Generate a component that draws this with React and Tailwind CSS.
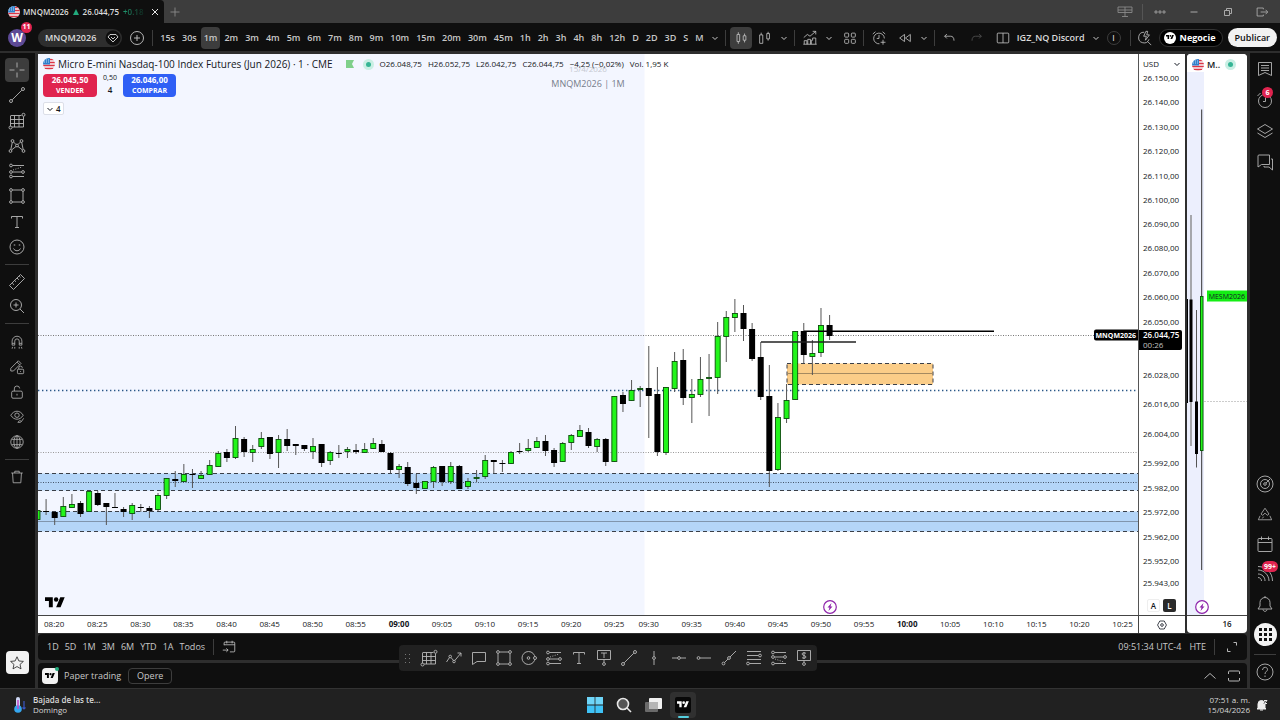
import { Fragment } from 'react';
import clsx from 'clsx';

// [wick top, body top, body bottom, wick bottom, up], oldest bar first
const CANDLES = [
  [510, 510, 520, 520, 1], [499, 511, 512, 515, 0], [512, 512, 518, 525, 0], [497, 506, 517, 517, 1],
  [494, 504, 508, 508, 1], [501, 503, 514, 517, 0], [491, 491, 512, 512, 1], [491, 493, 505, 506, 0],
  [503, 503, 507, 525, 0], [493, 507, 508, 508, 1], [507, 509, 512, 517, 0], [503, 505, 514, 520, 1],
  [504, 507, 508, 512, 1], [506, 508, 511, 518, 0], [493, 495, 510, 511, 1], [478, 478, 496, 499, 1],
  [471, 479, 481, 487, 0], [464, 474, 482, 482, 1], [469, 474, 475, 488, 1], [471, 475, 479, 479, 1],
  [460, 465, 475, 475, 1], [451, 453, 467, 467, 1], [449, 452, 458, 462, 0], [426, 438, 458, 459, 1],
  [437, 439, 452, 457, 0], [445, 449, 453, 462, 1], [432, 438, 447, 449, 1], [437, 437, 454, 459, 0],
  [435, 439, 453, 468, 1], [429, 439, 446, 451, 0], [444, 444, 446, 455, 0], [445, 445, 449, 451, 0],
  [438, 446, 452, 459, 1], [444, 444, 463, 467, 0], [451, 452, 461, 465, 1], [445, 453, 454, 458, 1],
  [447, 449, 452, 458, 1], [444, 450, 452, 454, 0], [443, 449, 453, 453, 1], [438, 443, 449, 449, 1],
  [440, 444, 452, 452, 0], [452, 453, 470, 473, 0], [464, 466, 470, 478, 1], [462, 467, 484, 486, 0],
  [474, 483, 488, 494, 0], [481, 481, 489, 489, 1], [466, 467, 482, 488, 1], [466, 466, 482, 486, 0],
  [462, 466, 482, 484, 1], [465, 466, 489, 489, 0], [478, 481, 487, 489, 1], [470, 477, 479, 482, 1],
  [455, 460, 477, 479, 1], [460, 460, 462, 473, 0], [460, 463, 464, 472, 0], [451, 452, 464, 464, 1],
  [443, 451, 452, 454, 0], [439, 448, 451, 452, 1], [437, 441, 448, 448, 1], [435, 441, 451, 456, 0],
  [448, 450, 463, 467, 0], [442, 443, 462, 462, 1], [434, 435, 443, 450, 1], [425, 430, 437, 437, 1],
  [428, 432, 446, 448, 0], [438, 439, 447, 452, 1], [438, 439, 462, 466, 0], [396, 396, 462, 462, 1],
  [392, 395, 404, 412, 0], [380, 390, 401, 401, 1], [386, 388, 390, 407, 1], [346, 388, 396, 438, 0],
  [367, 394, 452, 456, 0], [387, 387, 453, 455, 1], [352, 361, 389, 392, 1], [349, 360, 398, 405, 0],
  [379, 394, 398, 423, 1], [357, 379, 395, 397, 1], [354, 377, 379, 416, 1], [322, 336, 378, 394, 1],
  [311, 317, 337, 362, 1], [299, 313, 318, 332, 1], [305, 313, 329, 341, 0], [323, 329, 359, 361, 0],
  [342, 357, 397, 400, 0], [365, 396, 471, 487, 0], [403, 417, 470, 471, 1], [384, 400, 419, 423, 1],
  [331, 331, 400, 400, 1], [323, 331, 355, 363, 0], [340, 353, 357, 375, 1], [308, 325, 353, 357, 1],
  [315, 325, 336, 340, 0],
];

const PRICES = [
  ['26.150,00', 78], ['26.140,00', 102], ['26.130,00', 127], ['26.120,00', 151], ['26.110,00', 176],
  ['26.100,00', 200], ['26.090,00', 224], ['26.080,00', 248], ['26.070,00', 273], ['26.060,00', 297],
  ['26.050,00', 322], ['26.028,00', 375], ['26.016,00', 404], ['26.004,00', 434], ['25.992,00', 463],
  ['25.982,00', 488], ['25.972,00', 512], ['25.962,00', 537], ['25.952,00', 561], ['25.943,00', 583],
];

// label and the number of bars up to the next one
const TIMES = [
  ['08:20', 5], ['08:25', 5], ['08:30', 5], ['08:35', 5], ['08:40', 5], ['08:45', 5], ['08:50', 5], ['08:55', 5],
  ['09:00', 5], ['09:05', 5], ['09:10', 5], ['09:15', 5], ['09:20', 5], ['09:25', 4], ['09:30', 5], ['09:35', 5],
  ['09:40', 5], ['09:45', 5], ['09:50', 5], ['09:55', 5], ['10:00', 5], ['10:05', 5], ['10:10', 5], ['10:15', 5],
  ['10:20', 5], ['10:25', 3],
];

const INTERVALS = [
  '15s', '30s', '1m', '2m', '3m', '4m', '5m', '6m', '7m', '8m', '9m', '10m', '15m', '20m', '30m', '45m',
  '1h', '2h', '3h', '4h', '8h', '12h', 'D', '2D', '3D', 'S', 'M',
];

const ICONS = {
  cross: <path d="M9 1.500v5M9 11.500v5M1.500 9h5M11.500 9h5" />,
  trend: <><circle cx="3" cy="15" r="1.500" /><circle cx="15" cy="3" r="1.500" /><path d="M4.200 13.800 13.800 4.200" /></>,
  gann: <><path d="M2.500 4v10.500M2.500 3.500h11M15.500 4.500v10.500H4M6.500 3.500v11.500M11 3.500v11.500M2.500 7.500h13M2.500 11.500h13" /><circle cx="15.500" cy="2.800" r="1.500" /><circle cx="2.500" cy="15.500" r="1.500" /></>,
  pattern: <><circle cx="4.500" cy="4" r="1.400" /><circle cx="13.500" cy="4" r="1.400" /><circle cx="9" cy="8.500" r="1.400" /><circle cx="2.500" cy="14" r="1.400" /><circle cx="15.500" cy="14" r="1.400" /><path d="m4.300 5.300-1.500 7.300M13.700 5.300l1.500 7.300M5.500 5l2.500 2.500M12.500 5 10 7.500M3.500 13l4.500-3.500M14.500 13 10 9.500" /></>,
  forecast: <><circle cx="3" cy="3.500" r="1.400" /><circle cx="3" cy="10" r="1.400" /><circle cx="15" cy="10" r="1.400" /><circle cx="3" cy="14.500" r="1.400" /><path d="M4.500 3.500H16M4.500 10h9M4.500 14.500H16" /><path d="m5 8 9-3" strokeDasharray="1 1.500" /></>,
  rect: <><path d="M3 4.500v9M15 4.500v9M4.500 3h9M4.500 15h9" /><circle cx="3" cy="3" r="1.400" /><circle cx="15" cy="3" r="1.400" /><circle cx="3" cy="15" r="1.400" /><circle cx="15" cy="15" r="1.400" /></>,
  text: <path d="M3.500 5.500v-2h11v2M9 3.500v11M7 14.500h4" />,
  smile: <><circle cx="9" cy="9" r="7" /><path d="M5.500 10.500c1.500 3 5.500 3 7 0" /><path d="M6.500 6.500v1M11.500 6.500v1" strokeWidth="1.500" /></>,
  ruler: <path d="M1.500 12.500 12.500 1.500l4 4L5.500 16.500zM4.200 10l1.800 1.800M6.700 7.500 8 8.800M9 5l1.800 1.800M11.200 3l1.300 1.300" />,
  zoom: <><circle cx="8" cy="8" r="5.500" /><path d="m12 12 4 4M8 5.500v5M5.500 8h5" /></>,
  magnet: <path d="M3.500 12.500V8a5.500 5.500 0 0 1 11 0v4.500h-3V8a2.500 2.500 0 0 0-5 0v4.500zM3.500 10.500h3M11.500 10.500h3M4 14.500l-.5 2M6.500 14.500v2M11.500 14.500v2M14 14.500l.5 2" />,
  penlock: <><path d="M2 13.500v-3L10.500 2l3 3L5 13.500zM9 3.500l3 3" /><rect x="9.500" y="11.500" width="7" height="5" rx="1" /><path d="M11 11.500V10a2 2 0 0 1 4 0M13 13.500v1" /></>,
  unlock: <><rect x="3" y="8" width="12" height="8" rx="1.500" /><path d="M6 8V5.500a3 3 0 0 1 6-.5M9 11v2" /></>,
  eye: <><path d="M2 7c3.500-6 10.500-6 14 0-3.500 6-10.500 6-14 0z" /><circle cx="9" cy="7" r="2.500" /><path d="m10 15 2-2 2 1 2.500-3.500M10 15h3l1-1" /></>,
  globe: <><circle cx="9" cy="9" r="7" /><ellipse cx="9" cy="9" rx="3.500" ry="7" /><path d="M3 6h12M3 12h12M9 2v14" /></>,
  trash: <path d="M2.500 4.500h13M6.500 4.500v-2h5v2M4 4.500l.7 11h8.600l.7-11" />,
  star: <path d="m9 2 2.100 4.700 5.100.5-3.800 3.400 1.100 5L9 13l-4.500 2.600 1.100-5L1.800 7.200l5.100-.5z" />,
  path: <><path d="m1.500 13 3-4.500M6 8.500l2.500 3M9.800 11.500 16 4M12.500 4H16v3.500" /><circle cx="5.200" cy="7.500" r="1.300" /><circle cx="9" cy="12.500" r="1.300" /></>,
  callout: <path d="M2.500 3.500h13v9H7l-4.500 3z" />,
  circle: <><circle cx="8.500" cy="9" r="6.500" /><circle cx="8.500" cy="9" r="1.300" /><circle cx="15" cy="9" r="1.500" fill="#212121" /></>,
  textbox: <><path d="M2.500 1.500h13v9h-13zM6 4h6M9 4v5M9 10.500v3" /><circle cx="9" cy="15" r="1.400" /></>,
  vline: <><path d="M9 2v5.500M9 10.500V16" /><circle cx="9" cy="9" r="1.400" /></>,
  hline: <><path d="M2 9h5.500M10.500 9H16" /><circle cx="9" cy="9" r="1.400" /></>,
  hray: <><path d="M5 9h11" /><circle cx="3.500" cy="9" r="1.400" /></>,
  ray: <><circle cx="3.500" cy="14.500" r="1.400" /><circle cx="9" cy="9" r="1.400" /><path d="m4.500 13.500 3.500-3.500M10 8l6-6" /></>,
  fib: <><path d="M2 2.500h14M2 6.500h11.500M2 10.500h14M4.500 14.500H16" /><circle cx="15" cy="6.500" r="1.400" /><circle cx="3" cy="14.500" r="1.400" /></>,
  short: <><circle cx="3" cy="3.500" r="1.400" /><circle cx="3" cy="8" r="1.400" /><circle cx="15" cy="8" r="1.400" /><circle cx="3" cy="14.500" r="1.400" /><path d="M4.500 3.500H16M4.500 8h9M4.500 14.500H16" /><path d="m5 10 9 3" strokeDasharray="1 1.500" /></>,
  price: <><path d="M2.500 1.500h13v10h-13zM9 11.500v2M11 4.500c-.5-1-4-1-4 .5S11 6.500 11 8s-3.500 1.500-4 .5M9 3v7" /><circle cx="9" cy="15" r="1.400" /></>,
  candles: <path d="M4.500 5h3v8h-3zM6 2.500V5M6 13v2.500M11.500 6.500h3v5h-3zM13 4v2.500M13 11.500V14" />,
  candles2: <path d="M3 5.500h3.500V15H3zM11 4h3v6h-3zM12.500 2v2M12.500 10v2M4.700 3v2.500" />,
  chart: <path d="M2 8.500 6 5l3 2 6.500-5.500M12 1.500h3.500V5M2.500 16v-4h3v4M6.500 16v-5.500h3V16M10.500 16v-4.500H12V9h3.500v7M1.500 16h15" />,
  tiles: <><rect x="3" y="3.500" width="4.500" height="4.500" rx="1" /><rect x="10.500" y="3.500" width="4.500" height="4.500" rx="1" /><rect x="3" y="10.500" width="4.500" height="4.500" rx="1" /><rect x="10.500" y="10.500" width="4.500" height="4.500" rx="1" /></>,
  alarmplus: <path d="M9.500 15.500A6 6 0 1 1 15 9.500M9 5.500v4H6.500M2 4.500l3-2.500M16 4.500 13 2M13.500 11v5.500M10.800 13.800h5.500" />,
  replay: <path d="M8.500 5v8L3 9zM15 5v8L9.500 9z" />,
  undo: <path d="M5.500 4.500 3 7l2.500 2.500M3 7h6.500c2.500 0 4 1.500 4 5" />,
  redo: <path d="M12.500 4.500 15 7l-2.500 2.500M15 7H8.500c-2.500 0-4 1.500-4 5" />,
  layout: <path d="M3.500 3.500h11a1 1 0 0 1 1 1v9a1 1 0 0 1-1 1h-11a1 1 0 0 1-1-1v-9a1 1 0 0 1 1-1zM9 3.500v11" />,
  quick: <path d="M8 2.500a6 6 0 1 0 5.500 8M12 13l4 4M10 1.500 7.500 7h3l-1 4.500L14 5.500h-3l1-4z" />,
  list: <path d="M2.500 2.500h13v13L9 12.500l-6.500 3zM5 5.500h8M5 8h8M5 10.500h8" />,
  alarm: <><circle cx="9" cy="10" r="6.500" /><path d="M9.500 6.500v4H7M1.500 5l3-3" /></>,
  layers: <path d="M9 2.500 16.500 7 9 11.500 1.500 7zM1.500 11 9 15.500 16.500 11" />,
  chat: <path d="M3 2h10.500v9.500H5.500L2 14V3a1 1 0 0 1 1-1zM15 6h1.500v11L13 14H8v-1" />,
  target: <><circle cx="9" cy="9" r="8" /><circle cx="9" cy="9" r="4.500" /><circle cx="9" cy="9" r="1.300" /><path d="m10 8 4-4" /></>,
  peaks: <path d="M9 2.500 13.500 9l-2 1.500L9 8l-2.500 2.500-2-1.500zM3.500 11l-2 4.500h15l-2-4.500M6 14l1.500-2" />,
  calendar: <path d="M3 3.500h12a1 1 0 0 1 1 1v11a1 1 0 0 1-1 1H3a1 1 0 0 1-1-1v-11a1 1 0 0 1 1-1zM2 7.500h14M5.500 1.500v3.500M12.500 1.500v3.500" />,
  feed: <path d="M2 5c6 0 11 5 11 11M2 9c4 0 7 3 7 7M2 12.500c2 0 3.500 1.500 3.500 3.500M2 1.500c8 0 14.500 6 14.500 14.500" />,
  bell: <path d="M2 14h14l-2-3V7.500a5 5 0 0 0-10 0V11zM7 14.500c.5 2.500 3.500 2.500 4 0M9 1v1.500" />,
  help: <><circle cx="9" cy="9" r="8" /><path d="M6.500 7c0-3.500 5-3.500 5-.5 0 2-2.500 2-2.500 4.500M9 12.500v1.500" /></>,
  goto: <path d="M3.500 7V4.500a1 1 0 0 1 1-1h10a1 1 0 0 1 1 1v9a1 1 0 0 1-1 1H10M3.500 6.500h12M6.500 2v3M12.500 2v3M2 12.500h6M6 10.500l2 2-2 2" />,
  maximize: <path d="M10.500 4.500h3v3M7.500 13.500h-3v-3" />,
  frame: <path d="M3.500 7V5a1 1 0 0 1 1-1h9a1 1 0 0 1 1 1v2M14.500 11v2a1 1 0 0 1-1 1h-9a1 1 0 0 1-1-1v-2" />,
  up: <path d="m3.500 11.500 5.500-5 5.500 5" />,
  screens: <path d="M2 4h14v5.500H2zM9 4v9.500M6 13.500h6M2 7h14" />,
  more: <><circle cx="4.500" cy="9" r="1.300" /><circle cx="9" cy="9" r="1.300" /><circle cx="13.500" cy="9" r="1.300" /></>,
  min: <path d="M5.500 9h7" />,
  restore: <path d="M5.500 7.500h5v5h-5zM7.500 7V5.500h5v5H11" />,
  exit: <path d="M10.500 6V4.500h-7v9h7V12M7.500 9H15M13 6.500 15.500 9 13 11.500" />,
  close: <path d="m6 6 6 6M12 6l-6 6" />,
  plus: <path d="M9 4.500v9M4.500 9h9" />,
  add: <><circle cx="9" cy="9" r="6.500" /><path d="M9 6v6M6 9h6" /></>,
  gem: <><circle cx="9" cy="9" r="7.500" fill="#0f0f0f" stroke="none" /><path d="M6 5.500h6l2 2.500-5 5-5-5zM7 8l2 2 2-2" /></>,
  hex: <><path d="M6.500 4.500h5L14 9l-2.500 4.500h-5L4 9z" /><circle cx="9" cy="9" r="1.500" /></>,
};

function Icon({ name, className = 'size-[18px]' }) {
  return (
    <svg viewBox="0 0 18 18" className={clsx('shrink-0', className)} fill="none" stroke="currentColor" strokeWidth="0.9" aria-hidden="true">
      {ICONS[name]}
    </svg>
  );
}

function IconButton({ name, label, active, small, className }) {
  return (
    <button type="button" aria-label={label || name} className={clsx('flex min-w-[18px] shrink-0 items-center justify-center rounded', active && 'bg-[#3d3d3d]', className)}>
      <Icon name={name} className={small ? 'size-4' : 'size-[18px]'} />
    </button>
  );
}

function Chevron({ label = 'Más' }) {
  return (
    <button type="button" aria-label={label} className="flex w-3 shrink-0 justify-center">
      <svg viewBox="0 0 8 8" className="size-2" fill="none" stroke="currentColor"><path d="m1.500 3 2.500 2.500L6.500 3" /></svg>
    </button>
  );
}

function Divider({ className }) {
  return <div className={clsx('h-4 w-px shrink-0 bg-[#3d3d3d]', className)} />;
}

function Flag({ className = 'size-3' }) {
  return (
    <svg viewBox="0 0 12 12" className={clsx('shrink-0 rounded-full', className)} aria-hidden="true">
      <rect width="12" height="12" fill="#f5f5f7" />
      <path d="M6 1.500h6M6 4.500h6M0 7.500h12M0 10.500h12" stroke="#dc3545" strokeWidth="1.500" />
      <rect width="7" height="6.500" fill="#2f7fcb" />
      <path d="M1 2h5M1 4h5" stroke="#b9dcf5" strokeDasharray="1 1" />
    </svg>
  );
}

function Logo({ className }) {
  return (
    <svg viewBox="0 0 36 28" className={className} fill="currentColor" aria-hidden="true">
      <path d="M14 22H7V11H0V4h14v18zM28 22h-8l7.500-18h8L28 22z" />
      <circle cx="20" cy="8" r="4" />
    </svg>
  );
}

function Bolt() {
  return (
    <svg viewBox="0 0 14 14" className="size-3.5" fill="#fff" stroke="#8e24aa" aria-hidden="true">
      <circle cx="7" cy="7" r="6.300" strokeWidth="1.200" />
      <path d="M8.500 3 4.500 7.500h2L5.500 11l4-4.500h-2z" fill="#8e24aa" stroke="none" />
    </svg>
  );
}

function TabBar() {
  return (
    <div className="flex h-[23px] bg-[#3d3d3d] text-[#dbdbdb]">
      <div className="flex w-[164px] items-center rounded-tr bg-[#0f0f0f] pl-2 text-[8px] font-semibold">
        <Flag />
        <span className="ml-[3px]">MNQM2026</span>
        <svg viewBox="0 0 6 6" className="mx-1 size-1.5 shrink-0" fill="#22ab7d"><path d="M3 0l3 6H0z" /></svg>
        <span>26.044,75</span>
        <span className="ml-1 bg-linear-to-r from-[#1f9d74] to-[#0f2a20] bg-clip-text text-transparent">+0.18</span>
        <IconButton name="close" label="Cerrar pestaña" className="ml-auto text-white" />
      </div>
      <IconButton name="plus" label="Nueva pestaña" className="ml-0.5 text-[#8a8a8a]" />
      <div className="ml-auto flex items-center gap-4 pr-[9px] text-[#b5b5b5]">
        <IconButton name="screens" className="text-[#8a8a8a]" />
        <Divider className="-mx-2 bg-[#555]" />
        <IconButton name="more" small />
        <IconButton name="min" label="Minimizar" />
        <IconButton name="restore" label="Restaurar" />
        <IconButton name="exit" label="Salir" small />
      </div>
    </div>
  );
}

function TopToolbar() {
  return (
    <div className="flex h-7 items-center bg-[#0f0f0f] pt-px text-[9px] font-semibold text-[#c8c8c8]">
      <button type="button" aria-label="Perfil" className="relative ml-2 flex size-[18px] shrink-0 items-center justify-center rounded-full bg-[#5d4a96] text-xs font-bold text-white">
        W
        <span className="absolute -top-[7px] left-[13px] flex size-[11px] items-center justify-center rounded-full bg-[#e0244f] text-[7px]">11</span>
      </button>
      <button type="button" className="ml-3 flex h-[18px] items-center gap-2 rounded-full bg-[#2e2e2e] pl-[7px] text-[#dbdbdb]">
        MNQM2026
        <Icon name="gem" />
      </button>
      <IconButton name="add" label="Comparar" className="mx-[6px]" />
      <Divider />
      <div className="ml-1 flex items-center gap-px">
        {INTERVALS.map((t) => (
          <button key={t} type="button" className={clsx('h-[22px] rounded px-[3px]', t === '1m' && 'bg-[#3d3d3d]')}>{t}</button>
        ))}
      </div>
      <div className="ml-0.5 flex items-center gap-1">
        <Chevron />
        <Divider />
        <IconButton name="candles" label="Velas" active small className="h-[22px] w-[22px]" />
        <IconButton name="candles2" label="Tipo de gráfico" small />
        <Chevron />
        <Divider />
        <IconButton name="chart" label="Indicadores" small className="ml-0.5" />
        <Chevron />
        <IconButton name="tiles" label="Plantillas" small className="ml-0.5" />
        <Divider />
        <IconButton name="alarmplus" label="Alerta" small className="ml-0.5" />
        <IconButton name="replay" label="Repetición" small className="ml-1" />
        <Chevron />
        <Divider />
        <IconButton name="undo" label="Deshacer" small className="ml-0.5" />
        <IconButton name="redo" label="Rehacer" small className="ml-1 text-[#555]" />
      </div>
      <div className="ml-auto flex shrink-0 items-center gap-[5px] pr-[3px]">
        <IconButton name="layout" label="Diseño" small />
        <span className="text-[#dbdbdb]">IGZ_NQ Discord</span>
        <Chevron />
        <span className="flex size-[14px] items-center justify-center rounded-full border border-[#3d3d3d] text-[8px]">I</span>
        <Divider className="ml-1" />
        <IconButton name="quick" label="Búsqueda rápida" small />
        <button type="button" className="flex h-[18px] items-center gap-1 rounded-full border border-[#333] bg-black pl-1 pr-1.5 font-bold text-white">
          <span className="flex size-3 items-center justify-center rounded-full bg-white text-black"><Logo className="w-2" /></span>
          Negocie
        </button>
        <button type="button" className="h-[19px] rounded-full bg-[#f2f2f2] px-[7px] text-[#0f0f0f]">Publicar</button>
      </div>
    </div>
  );
}

function Rule() {
  return <div className="my-[5px] h-px w-6 shrink-0 bg-[#3d3d3d]" />;
}

function DrawingRail() {
  return (
    <aside className="flex w-[35px] shrink-0 flex-col items-center bg-[#0f0f0f] pb-[14px] pr-px pt-[5px] text-[#b8b8b8]">
      <div className="flex h-[201px] flex-col justify-between">
        {['cross', 'trend', 'gann', 'pattern', 'forecast', 'rect', 'text', 'smile'].map((n) => (
          <IconButton key={n} name={n} active={n === 'cross'} className="size-6" />
        ))}
      </div>
      <Rule />
      <IconButton name="ruler" className="size-6" />
      <IconButton name="zoom" className="size-6" />
      <Rule />
      {['magnet', 'penlock', 'unlock', 'eye', 'globe'].map((n) => (
        <IconButton key={n} name={n} small className="h-[25px] w-6" />
      ))}
      <Rule />
      <IconButton name="trash" small className="size-6" />
      <button type="button" aria-label="Favoritos" className="mt-auto flex size-[23px] items-center justify-center rounded bg-[#f2f2f2] text-[#222]">
        <Icon name="star" className="size-4" />
      </button>
    </aside>
  );
}

function Badge({ children }) {
  return <span className="absolute -top-1 left-1.5 min-w-[11px] rounded-full bg-[#e0244f] px-[2px] text-center text-[7px] font-bold leading-[11px] text-white">{children}</span>;
}

function WidgetRail() {
  return (
    <aside className="flex w-[30px] shrink-0 flex-col items-center bg-[#0f0f0f] pb-[7px] pt-[7px] text-[#b5b5b5]">
      <div className="flex flex-col gap-[13px]">
        <IconButton name="list" label="Lista" />
        <div className="relative"><IconButton name="alarm" label="Alertas" /><Badge>6</Badge></div>
        <IconButton name="layers" />
        <IconButton name="chat" />
      </div>
      <div className="mt-auto flex flex-col items-center gap-3">
        <IconButton name="target" />
        <IconButton name="peaks" small className="h-[18px]" />
        <IconButton name="calendar" />
        <div className="relative"><IconButton name="feed" /><Badge>99+</Badge></div>
        <IconButton name="bell" label="Notificaciones" />
      </div>
      <button type="button" aria-label="Productos" className="mt-2.5 flex size-[23px] items-center justify-center rounded-full bg-[#f2f2f2]">
        <svg viewBox="0 0 13 13" className="size-[13px]" fill="#111">
          {[0, 5, 10].map((y) => [0, 5, 10].map((x) => <rect key={`${x}-${y}`} x={x} y={y} width="3" height="3" />))}
        </svg>
      </button>
      <div className="my-2 h-px w-[22px] bg-[#3d3d3d]" />
      <IconButton name="help" label="Ayuda" />
    </aside>
  );
}

function Zone({ y1, y2, mid, dash }) {
  return (
    <>
      <rect x="38" y={y1} width="1100" height={y2 - y1} fill="#b4d5f8" />
      <path d={`M38 ${y1}H1138M38 ${y2}H1138`} stroke="#3a3f48" strokeDasharray="4 3" />
      <path d={`M38 ${mid}H1138`} stroke={dash ? '#44546a' : '#8095ad'} strokeDasharray={dash ? '1 1.500' : 'none'} />
    </>
  );
}

function CandleChart() {
  return (
    <svg viewBox="38 54 1100 561" preserveAspectRatio="none" className="absolute inset-0 h-full w-full" aria-hidden="true">
      <rect x="38" y="54" width="606.500" height="561" fill="#f3f6ff" />
      <Zone y1={473.5} y2={490.5} mid={482.5} dash />
      <Zone y1={511.5} y2={531.5} mid={521.5} />
      <rect x="787" y="363.500" width="146" height="21" fill="#fbcd88" stroke="#3a3f48" strokeDasharray="4 3" />
      <path d="M787 373.500H933" stroke="#a58a60" />
      <path d="M38 335.500H1138" stroke="#777" strokeDasharray="1 1.500" />
      <path d="M38 390.500H1138" stroke="#2a5788" strokeWidth="1.400" strokeDasharray="1.400 2.600" />
      <path d="M38 452.500H1138" stroke="#999" strokeDasharray="1 1.500" />
      {CANDLES.map(([wt, bt, bb, wb, up], i) => {
        const x = 829.6 - (CANDLES.length - 1 - i) * 8.61;
        return (
          <Fragment key={i}>
            <path d={`M${x} ${wt}V${wb}`} stroke="#555" />
            {bb - bt > 1 && up
              ? <rect x={x - 2.500} y={bt + 0.5} width="5" height={bb - bt - 1} fill="#22f51a" stroke="#0b4d0b" strokeWidth="0.900" />
              : <rect x={x - 3} y={bt} width="6" height={bb - bt} fill="#000" />}
          </Fragment>
        );
      })}
      <path d="M804 331.300H994" stroke="#000" strokeWidth="1.500" />
      <path d="M761 342H856" stroke="#222" strokeWidth="1.500" />
    </svg>
  );
}

function MainChart() {
  return (
    <div className="relative min-h-0 min-w-0 overflow-hidden">
      <CandleChart />
      <div className="absolute left-1/2 top-[7px] -translate-x-1/2 whitespace-nowrap text-center text-[8px] leading-[15px] text-[#777d8b]">
        <div className="text-[#c5c8d0]">15/4/2026</div>
        <div className="text-[9px]">MNQM2026 | 1M</div>
      </div>
      <div className="relative flex h-full flex-col items-start pl-[5px] pt-1">
        <div className="flex h-3 items-center whitespace-nowrap">
          <Flag />
          <h1 className="ml-[3px] text-[10px] font-medium">Micro E-mini Nasdaq-100 Index Futures (Jun 2026) · 1 · CME</h1>
          <svg viewBox="0 0 8 8" className="ml-[13px] size-2" fill="#7fd08a"><path d="M0 0h8L6 4l2 4H0z" /></svg>
          <span className="ml-[9px] flex size-[11px] items-center justify-center rounded-full bg-[#c9efe4]"><span className="size-[5px] rounded-full bg-[#35b595]" /></span>
          <div className="ml-1.5 flex gap-1.5 text-[8px] font-medium">
            <span>O26.048,75</span><span>H26.052,75</span><span>L26.042,75</span><span>C26.044,75</span><span>−4,25 (−0,02%)</span><span>Vol. 1,95 K</span>
          </div>
        </div>
        <div className="mt-1 flex text-center">
          <button type="button" className="w-[54px] rounded bg-[#e0244f] py-px text-[8px] font-bold leading-[10px] text-white">26.045,50<br /><span className="text-[7px]">VENDER</span></button>
          <div className="w-[26px] text-[7px] leading-[7px]">0,50<div className="mt-[5px] text-[8px] font-semibold leading-2">4</div></div>
          <button type="button" className="w-[53px] rounded bg-[#2f5ff5] py-px text-[8px] font-bold leading-[10px] text-white">26.046,00<br /><span className="text-[7px]">COMPRAR</span></button>
        </div>
        <button type="button" className="mt-[5px] flex h-[13px] items-center rounded-xs border border-[#dcdfe8] bg-white px-[2px] text-[8px] font-semibold"><svg viewBox="0 0 8 8" className="mr-0.5 size-2" fill="none" stroke="currentColor"><path d="m1.500 3 2.500 2.500L6.500 3" /></svg>4</button>
        <Logo className="mb-1 ml-0.5 mt-auto w-5 text-black" />
      </div>
      <div className="absolute bottom-px left-[72%] -translate-x-1/2"><Bolt /></div>
      <div className="absolute right-0 top-[50.1%] -translate-y-1/2 rounded-l-xs bg-black px-[2px] text-[7px] font-bold leading-[11px] text-white">MNQM2026</div>
    </div>
  );
}

function PriceAxis() {
  return (
    <div className="relative border-l border-[#555] text-[8px] font-medium">
      {PRICES.map(([label, y]) => (
        <div key={label} className="absolute left-1 -translate-y-1/2 leading-3" style={{ top: `${((y - 54) / 561) * 100}%` }}>{label}</div>
      ))}
      <div className="relative flex h-5 items-center justify-between bg-white pl-1 pr-0.5">
        <span>USD</span>
        <Chevron label="Divisa" />
      </div>
      <div className="absolute left-0 right-[3px] top-[49.200%] rounded-r-xs bg-black pl-1 leading-[10px] text-white"><b className="font-semibold">26.044,75</b><br /><span className="text-[#c0c0c0]">00:26</span></div>
      <div className="absolute bottom-[3px] left-2 flex gap-[3px] text-[8px] font-semibold">
        <button type="button" className="size-[13px] rounded-xs border border-[#eee] leading-none">A</button>
        <button type="button" className="size-[13px] rounded-xs bg-[#2a2a2a] leading-none text-white">L</button>
      </div>
    </div>
  );
}

function TimeAxis() {
  return (
    <div className="flex min-w-0 items-center overflow-hidden border-t border-[#444] pb-px pl-[6px] text-[8px] font-medium">
      {TIMES.map(([t, bars]) => (
        <div key={t} className="w-0 whitespace-nowrap" style={{ flexGrow: bars }}>
          <span className={clsx((t === '09:00' || t === '10:00') && 'font-bold')}>{t}</span>
        </div>
      ))}
    </div>
  );
}

function MiniChart() {
  return (
    <section className="flex w-[60px] shrink-0 flex-col overflow-hidden rounded bg-white text-[#131722]">
      <div className="relative min-h-0 flex-1">
        <svg viewBox="1187 54 60 561" preserveAspectRatio="none" className="absolute inset-0 h-full w-full" aria-hidden="true">
          <rect x="1187" y="54" width="17" height="561" fill="#eceffd" />
          <path d="M1204 401.500H1247" stroke="#ccc" strokeDasharray="2 1" />
          <path d="M1187.500 299V403" stroke="#000" />
          <path d="M1191 215V446" stroke="#888" strokeWidth="1.400" />
          <rect x="1189.500" y="299.500" width="3" height="102.500" />
          <path d="M1196.500 310V467.500" stroke="#555" />
          <rect x="1195" y="401.500" width="3" height="52.500" />
          <path d="M1201.700 109.500V570" stroke="#333" />
          <rect x="1200.500" y="296.500" width="2.500" height="154" fill="#22f51a" stroke="#0b5d0b" />
        </svg>
        <div className="relative flex items-center gap-[3px] bg-white pl-[5px] pt-1 text-[9px] font-semibold">
          <Flag />
          M..
          <span className="ml-0.5 flex size-[11px] items-center justify-center rounded-full bg-[#c9efe4]"><span className="size-[5px] rounded-full bg-[#35b595]" /></span>
        </div>
        <div className="absolute right-0 top-[43.200%] -translate-y-1/2 bg-[#14ee14] px-[2px] text-[7px] font-medium leading-[11px]">MESM2026</div>
        <div className="absolute bottom-px left-2"><Bolt /></div>
      </div>
      <div className="h-[18px] border-t border-[#444] pl-5 text-center text-[8px] font-semibold leading-4">16</div>
    </section>
  );
}

function BottomBars() {
  return (
    <>
      <div className="mt-px flex h-[26px] shrink-0 items-center rounded bg-[#0f0f0f] pl-[9px] text-[9px] font-medium text-[#c8c8c8]">
        <div className="flex items-center gap-1.5">
          {['1D', '5D', '1M', '3M', '6M', 'YTD', '1A', 'Todos'].map((r) => <button key={r} type="button">{r}</button>)}
        </div>
        <Divider className="ml-2 mr-1.5" />
        <IconButton name="goto" label="Ir a" small />
        <div className="ml-auto flex items-center gap-2 pr-1.5">
          <span>09:51:34 UTC-4</span>
          <button type="button">HTE</button>
          <Divider />
          <IconButton name="maximize" label="Maximizar" />
        </div>
      </div>
      <div className="mt-[3px] flex h-[25px] shrink-0 items-center rounded-t bg-[#0f0f0f] pl-1 text-[9px] font-medium text-[#c8c8c8]">
        <span className="relative flex size-4 items-center justify-center rounded bg-[#f2f2f2] text-black">
          <Logo className="w-2.5" />
          <span className="absolute -right-px -top-px size-1 rounded-full bg-[#22ab7d]" />
        </span>
        <button type="button" className="ml-1.5">Paper trading</button>
        <button type="button" className="ml-[7px] h-4 rounded border border-[#3d3d3d] px-2">Opere</button>
        <div className="ml-auto flex items-center gap-1.5 pr-1">
          <IconButton name="up" label="Abrir panel" />
          <IconButton name="frame" label="Maximizar panel" />
        </div>
      </div>
    </>
  );
}

function FavoritesBar() {
  return (
    <div className="absolute bottom-[17px] left-[31.200%] flex h-[26px] items-center gap-[7px] rounded bg-[#212121] pl-1.5 pr-1 text-[#b8b8b8]">
      <svg viewBox="0 0 6 9" className="mr-[2px] h-[9px] w-1.5" fill="#777">
        {[0, 4, 8].map((y) => <Fragment key={y}><rect y={y} width="1" height="1" /><rect x="4" y={y} width="1" height="1" /></Fragment>)}
      </svg>
      {['gann', 'path', 'callout', 'rect', 'circle', 'forecast', 'text', 'textbox', 'trend', 'vline', 'hline', 'hray', 'ray', 'fib', 'short', 'price'].map((n) => (
        <IconButton key={n} name={n} />
      ))}
    </div>
  );
}

function Taskbar() {
  return (
    <footer className="grid h-8 grid-cols-3 items-center border-t border-[#333] bg-[#212121] text-[8px] font-medium leading-[10px] text-[#d8d8d8]">
      <div className="flex items-center gap-[7px] pl-3.5">
        <svg viewBox="0 0 12 16" className="h-4 w-3" aria-hidden="true">
          <rect x="2" y="0" width="4" height="11" rx="2" fill="#cfd8f5" />
          <circle cx="4" cy="12" r="3.800" fill="#35a7f0" />
          <path d="M4 3v9" stroke="#c04ac9" strokeWidth="1.500" />
          <path d="M10 4v8M8.500 10.500 10 12l1.500-1.500" stroke="#3b55c4" strokeWidth="1.200" fill="none" />
        </svg>
        <div><b className="font-semibold">Bajada de las te...</b><br />Domingo</div>
      </div>
      <div className="flex items-center justify-center gap-[5px]">
        <button type="button" aria-label="Inicio" className="flex size-6 items-center justify-center">
          <svg viewBox="0 0 16 16" className="size-4" fill="#3fc3f7"><path d="M0 0h7.600v7.600H0zM8.400 0H16v7.600H8.400z" fill="#6ed5f8" /><path d="M0 8.400h7.600V16H0zM8.400 8.400H16V16H8.400z" /></svg>
        </button>
        <button type="button" aria-label="Buscar" className="flex size-6 items-center justify-center">
          <svg viewBox="0 0 16 16" className="size-4" fill="#555" stroke="#e8e8e8" strokeWidth="1.600"><circle cx="7" cy="7" r="5.500" /><path d="m11 11 4 4" /></svg>
        </button>
        <button type="button" aria-label="Vista de tareas" className="flex size-6 items-center justify-center">
          <svg viewBox="0 0 17 16" className="h-4 w-[17px]"><rect x="0" y="5" width="13" height="10" rx="1" fill="#6a6a6a" /><rect x="4" y="1" width="13" height="11" rx="1" fill="#f0f0f0" /><path d="M4 5h9v7H4z" fill="#b5b5b5" /></svg>
        </button>
        <button type="button" aria-label="TradingView" className="relative flex size-[26px] items-center justify-center rounded bg-[#303030]">
          <span className="flex size-4 items-center justify-center rounded-xs bg-[#080808] text-white"><Logo className="w-3" /></span>
          <span className="absolute bottom-0 h-0.5 w-[11px] rounded-full bg-[#55cfdf]" />
        </button>
      </div>
      <div className="flex items-center justify-end gap-1.5 pr-3 text-right">
        <div>07:51 a. m.<br />15/04/2026</div>
        <svg viewBox="0 0 12 12" className="size-3" aria-hidden="true"><path d="M2 9V5a3.500 3.500 0 0 1 7 0v4l1 1H1zM4 11h3" fill="#eee" stroke="#eee" /><path d="M7 1h4L8 4.500h3" fill="none" stroke="#212121" /><path d="M8 1.500h3L8.500 4.500H11" fill="none" stroke="#eee" /></svg>
      </div>
    </footer>
  );
}

export default function App() {
  return (
    <div className="flex h-screen min-h-[600px] flex-col overflow-hidden bg-[#2e2e2e] font-['Open_Sans',sans-serif]">
      <TabBar />
      <TopToolbar />
      <main className="relative mt-0.5 flex min-h-0 flex-1">
        <DrawingRail />
        <div className="mx-[3px] flex min-w-0 flex-1 flex-col">
          <div className="flex min-h-0 flex-1 gap-0.5 pt-px">
            <section className="grid min-w-0 flex-1 grid-cols-[minmax(0,1fr)_47px] grid-rows-[minmax(0,1fr)_18px] bg-white text-[#131722]">
              <MainChart />
              <PriceAxis />
              <TimeAxis />
              <button type="button" aria-label="Ajustes" className="flex items-center justify-center border-l border-t border-[#444]"><Icon name="hex" className="size-4" /></button>
            </section>
            <MiniChart />
          </div>
          <BottomBars />
        </div>
        <WidgetRail />
        <FavoritesBar />
      </main>
      <Taskbar />
    </div>
  );
}
